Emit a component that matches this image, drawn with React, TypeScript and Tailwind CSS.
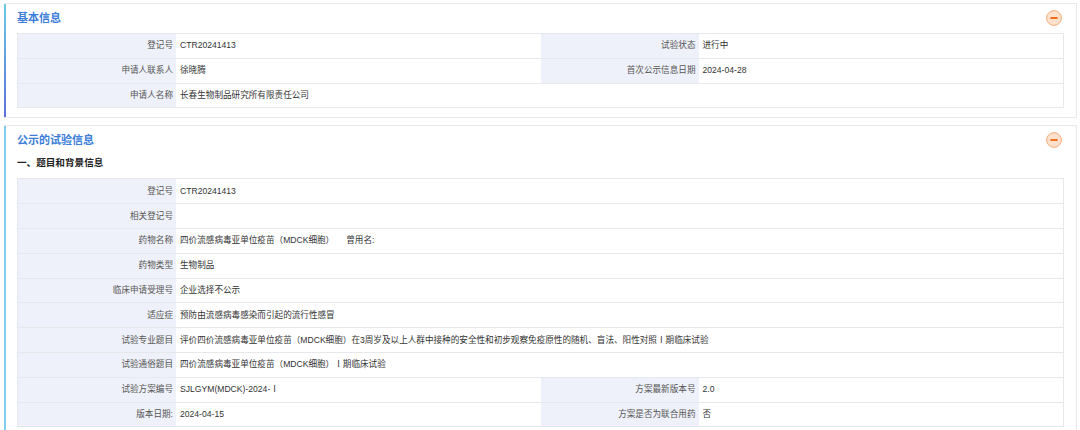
// 临床试验登记信息 详情页
// 基本信息 + 公示的试验信息 两个折叠面板

type Cell = { label: string; value?: React.ReactNode }
type Row = Cell[]

const basicRows: Row[] = [
  [
    { label: '登记号', value: 'CTR20241413' },
    { label: '试验状态', value: '进行中' },
  ],
  [
    { label: '申请人联系人', value: '徐晓腾' },
    { label: '首次公示信息日期', value: '2024-04-28' },
  ],
  [{ label: '申请人名称', value: '长春生物制品研究所有限责任公司' }],
]

const trialRows: Row[] = [
  [{ label: '登记号', value: 'CTR20241413' }],
  [{ label: '相关登记号', value: '' }],
  [
    {
      label: '药物名称',
      value: (
        <>
          四价流感病毒亚单位疫苗（MDCK细胞）<span className="ml-[12px]">曾用名:</span>
        </>
      ),
    },
  ],
  [{ label: '药物类型', value: '生物制品' }],
  [{ label: '临床申请受理号', value: '企业选择不公示' }],
  [{ label: '适应症', value: '预防由流感病毒感染而引起的流行性感冒' }],
  [
    {
      label: '试验专业题目',
      value:
        '评价四价流感病毒亚单位疫苗（MDCK细胞）在3周岁及以上人群中接种的安全性和初步观察免疫原性的随机、盲法、阳性对照Ⅰ期临床试验',
    },
  ],
  [{ label: '试验通俗题目', value: '四价流感病毒亚单位疫苗（MDCK细胞）Ⅰ期临床试验' }],
  [
    { label: '试验方案编号', value: 'SJLGYM(MDCK)-2024-Ⅰ' },
    { label: '方案最新版本号', value: '2.0' },
  ],
  [
    { label: '版本日期:', value: '2024-04-15' },
    { label: '方案是否为联合用药', value: '否' },
  ],
]

function CollapseIcon() {
  return (
    <svg width="16" height="16" viewBox="0 0 16 16">
      <circle cx="8" cy="8" r="7.4" fill="#fde1cd" stroke="#f6ab7a" strokeWidth="1" />
      <rect x="4.4" y="7" width="7.2" height="2" rx="0.5" fill="#f26f1f" />
    </svg>
  )
}

function InfoTable({ rows }: { rows: Row[] }) {
  return (
    <div className="border border-[#e6e8ec] border-b-0">
      {rows.map((row, i) => (
        <div
          key={i}
          className={
            row.length === 2
              ? 'grid grid-cols-[158px_1fr_158px_1fr] h-[24.8px] border-b border-[#e6e8ec]'
              : 'grid grid-cols-[158px_1fr] h-[24.8px] border-b border-[#e6e8ec]'
          }
        >
          {row.map((cell, j) => (
            <div key={j} className="contents">
              <div className="bg-[#eef1f9] flex items-center justify-end pr-[3px] text-[#555] whitespace-nowrap">
                {cell.label}
              </div>
              <div className="flex items-center pl-[4px] text-[#333] whitespace-nowrap">{cell.value}</div>
            </div>
          ))}
        </div>
      ))}
    </div>
  )
}

function Panel({
  title,
  strip,
  children,
}: {
  title: string
  strip: string
  children: React.ReactNode
}) {
  return (
    <div className="flex border border-l-0 border-[#e9e9e9] bg-white">
      <div className={`w-[2px] shrink-0 ${strip}`} />
      <div className="flex-1 pl-[11px] pr-[12px] pt-[4px]">
        <div className="h-[20px] flex items-center justify-between pr-[2px]">
          <h3 className="text-[11px] font-bold text-[#3b7dd8]">{title}</h3>
          <CollapseIcon />
        </div>
        {children}
      </div>
    </div>
  )
}

export default function App() {
  return (
    <div
      className="w-[1080px] h-[430px] overflow-hidden bg-white pl-[4px] pr-[3px] pt-[3px] text-[8.6px]"
      style={{ fontFamily: '"Liberation Sans", "Noto Sans CJK SC", sans-serif' }}
    >
      <Panel title="基本信息" strip="bg-gradient-to-b from-[#6ccbe6] to-[#5a6fd8]">
        <div className="mt-[5px] pb-[9px]">
          <InfoTable rows={basicRows} />
        </div>
      </Panel>

      <div className="mt-[7px]">
        <Panel title="公示的试验信息" strip="bg-[#84ccec]">
          <div className="mt-[3px] h-[20px] flex items-center text-[9.6px] font-bold text-[#222]">
            一、题目和背景信息
          </div>
          <div className="mt-[5px] pb-[9px]">
            <InfoTable rows={trialRows} />
          </div>
        </Panel>
      </div>
    </div>
  )
}
